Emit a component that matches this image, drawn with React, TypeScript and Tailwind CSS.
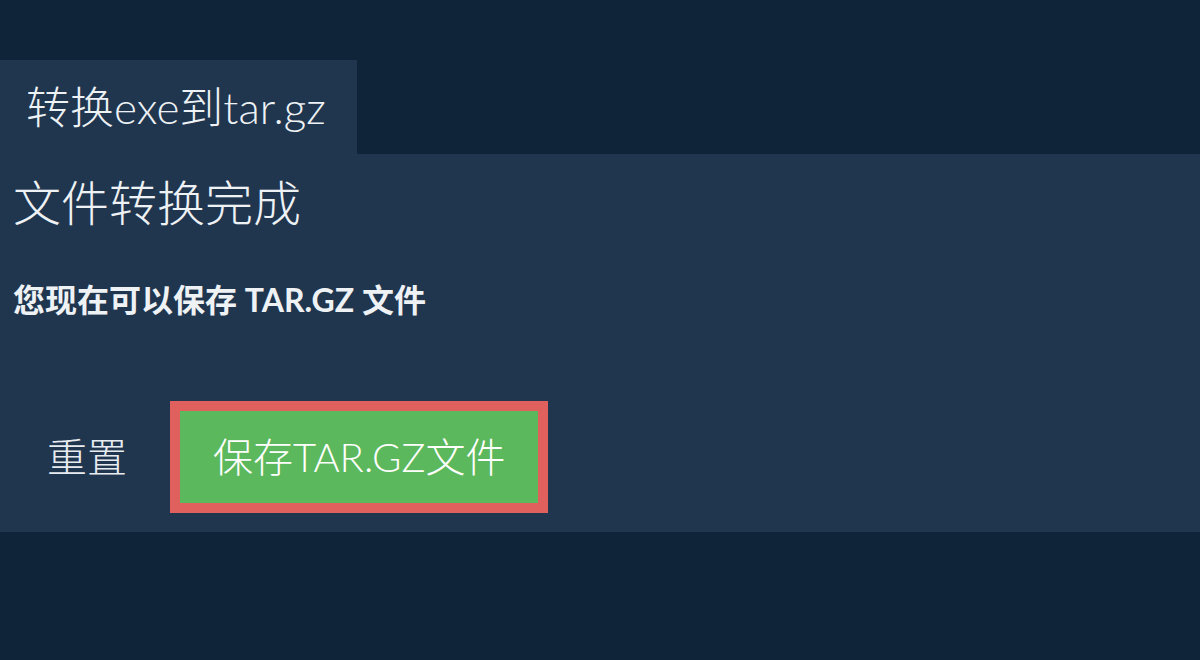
const lightStack = 'Lato, "Noto Sans CJK SC Light", "Noto Sans CJK SC DemiLight", "Noto Sans CJK SC", sans-serif'

export default function App() {
  return (
    <div
      className="min-h-[660px] w-full bg-[#0f2339] pt-[60px] text-[#eef2f5]"
      style={{ fontFamily: 'Lato, "Noto Sans CJK SC", sans-serif' }}
    >
      <div className="flex">
        <div
          className="flex h-[94px] w-[357px] items-center bg-[#20364f] pl-[26px] text-[44px] font-light"
          style={{ fontFamily: lightStack }}
        >
          转换exe到tar.gz
        </div>
      </div>
      <div className="h-[378px] bg-[#20364f] px-[13px] pt-[17px]">
        <h1 className="text-[48px] leading-[64px] font-light" style={{ fontFamily: lightStack }}>
          文件转换完成
        </h1>
        <p className="mt-[45px] text-[32px] leading-[40px] font-bold">您现在可以保存 TAR.GZ 文件</p>
        <div className="mt-[81px] flex items-center" style={{ fontFamily: lightStack }}>
          <button className="px-[34px] text-[40px] font-light text-[#e8ecf0]">重置</button>
          <button className="ml-[9px] h-[112px] border-[10px] border-[#df605d] bg-[#5cb85c] px-[33px] text-[40px] font-light text-white">
            保存TAR.GZ文件
          </button>
        </div>
      </div>
    </div>
  )
}
